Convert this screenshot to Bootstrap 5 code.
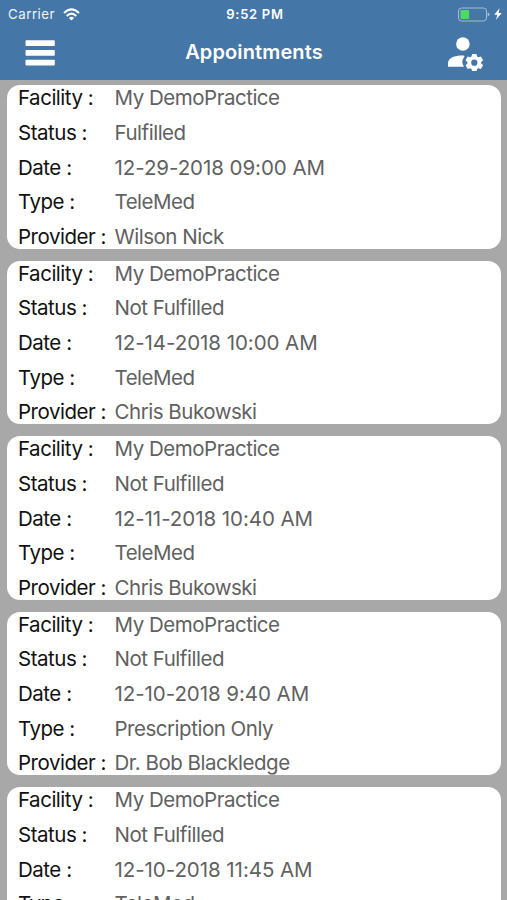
<!DOCTYPE html>
<html lang="en">
<head>
<meta charset="utf-8">
<meta name="viewport" content="width=device-width, initial-scale=1">
<title>Appointments</title>
<link href="https://cdn.jsdelivr.net/npm/bootstrap@5.3.0/dist/css/bootstrap.min.css" rel="stylesheet">
<style>
body { font-family: Inter, "Liberation Sans", sans-serif; background: #a8a8a8; }
.app-header { background: #4476a8; height: 79.5px; }
.status-bar { height: 27px; font-size: 13px; line-height: 27px; grid-template-columns: 1fr auto 1fr; padding: 0 5px 0 8px; }
.carrier { font-size: 13.3px; letter-spacing: .5px; opacity: .93; }
.clock { letter-spacing: .7px; padding-top: 1px; }
.title-bar { height: 51px; grid-template-columns: 1fr auto 1fr; padding: 0 24px 0 25px; }
.title-bar h1 { font-size: 20px; line-height: 51px; letter-spacing: .12px; }
.appt-list { padding: 5.7px 6px 0 7px; gap: 12.1px; }
.appt { border-radius: 13px; height: 163.4px; padding-left: 11px; row-gap: 9.6px; font-size: 20.5px; line-height: 25.1px; letter-spacing: -.48px; }
.appt dt { width: 96.5px; color: #111; }
.appt dd { color: #616161; }
.appt dd.when { letter-spacing: -.06px; }
.appt dt span, .appt dd span { display: inline-block; white-space: nowrap; }
</style>
</head>
<body>
<div class="vh-100 overflow-hidden d-flex flex-column">
  <header class="app-header text-white flex-shrink-0">
    <div class="status-bar d-grid align-items-center">
      <div class="d-flex align-items-center gap-2">
        <span class="carrier">Carrier</span>
        <svg class="flex-shrink-0" width="17" height="13" viewBox="0 0 17 13" fill="none" stroke="#fff" stroke-width="2.1"><path d="M1 4.9Q8.5-2.1 16 4.9M3.7 7.9Q8.5 3.3 13.3 7.9"/><path d="M5.9 9.9Q8.5 7.6 11.1 9.9L8.5 12.5Z" fill="#fff" stroke="none"/></svg>
      </div>
      <span class="clock fw-semibold">9:52 PM</span>
      <div class="d-flex align-items-center justify-content-end gap-1">
        <svg width="33" height="15" viewBox="0 0 33 15"><rect x="1.5" y="1" width="28" height="13" rx="3" fill="none" stroke="#a3bdd6"/><rect x="3.4" y="3" width="8.8" height="9" rx="1" fill="#4cd964"/><path d="M30.7 5.2Q32.5 6 32.5 7.5T30.7 9.8Z" fill="#a3bdd6"/></svg>
        <svg width="8" height="12" viewBox="0 0 8 12" fill="#fff"><path d="M5.5.3.2 6.7H3.3L2 11.7 7.8 5.1H4.6Z"/></svg>
      </div>
    </div>
    <div class="title-bar d-grid align-items-center">
      <svg width="30" height="26" viewBox="0 0 30 26" fill="#fff" role="img" aria-label="Menu"><rect x=".5" y=".3" width="29.3" height="5.7" rx=".8"/><rect x=".5" y="10" width="29.3" height="5.7" rx=".8"/><rect x=".5" y="19.7" width="29.3" height="5.7" rx=".8"/></svg>
      <h1 class="m-0 fw-semibold">Appointments</h1>
      <svg class="ms-auto" width="36" height="36" viewBox="0 0 36 36" fill="#fff" role="img" aria-label="Account settings"><circle cx="15.9" cy="9" r="6.8"/><path d="M1 31.7V28.2C1 22.4 8 20.2 16.5 20.4Q18.2 20.5 17.1 22.2C14.6 25.3 14.8 28.5 17 31.7Z"/><path fill-rule="evenodd" d="M24.8 19.3h4.4l.6 2.5 1.4.8 2.4-.8 2.2 3.8-1.9 1.7v1.6l1.9 1.7-2.2 3.8-2.4-.8-1.4.8-.6 2.5h-4.4l-.6-2.5-1.4-.8-2.4.8-2.2-3.8 1.9-1.7v-1.6l-1.9-1.7 2.2-3.8 2.4.8 1.4-.8ZM27 25a3.1 3.1 0 1 0 0 6.2 3.1 3.1 0 1 0 0-6.2Z" transform="translate(.3 -.4)"/></svg>
    </div>
  </header>
  <main class="appt-list d-flex flex-column" id="list"></main>
</div>
<script>
const appointments = [
  ["Fulfilled", "12-29-2018 09:00 AM", "TeleMed", "Wilson Nick"],
  ["Not Fulfilled", "12-14-2018 10:00 AM", "TeleMed", "Chris Bukowski"],
  ["Not Fulfilled", "12-11-2018 10:40 AM", "TeleMed", "Chris Bukowski"],
  ["Not Fulfilled", "12-10-2018 9:40 AM", "Prescription Only", "Dr. Bob Blackledge"],
  ["Not Fulfilled", "12-10-2018 11:45 AM", "TeleMed"]
];
const labels = ["Facility :", "Status :", "Date :", "Type :", "Provider :"];
document.getElementById("list").innerHTML = appointments.map(a =>
  '<dl class="appt bg-white m-0 d-flex flex-column flex-shrink-0 overflow-hidden">' +
  ["My DemoPractice", ...a].map((v, i) =>
    `<div class="d-flex"><dt class="fw-normal flex-shrink-0"><span>${labels[i]}</span></dt><dd class="m-0${i === 2 ? " when" : ""}"><span>${v}</span></dd></div>`
  ).join("") + "</dl>").join("");
</script>
<script src="https://cdn.jsdelivr.net/npm/bootstrap@5.3.0/dist/js/bootstrap.bundle.min.js"></script>
</body>
</html>
